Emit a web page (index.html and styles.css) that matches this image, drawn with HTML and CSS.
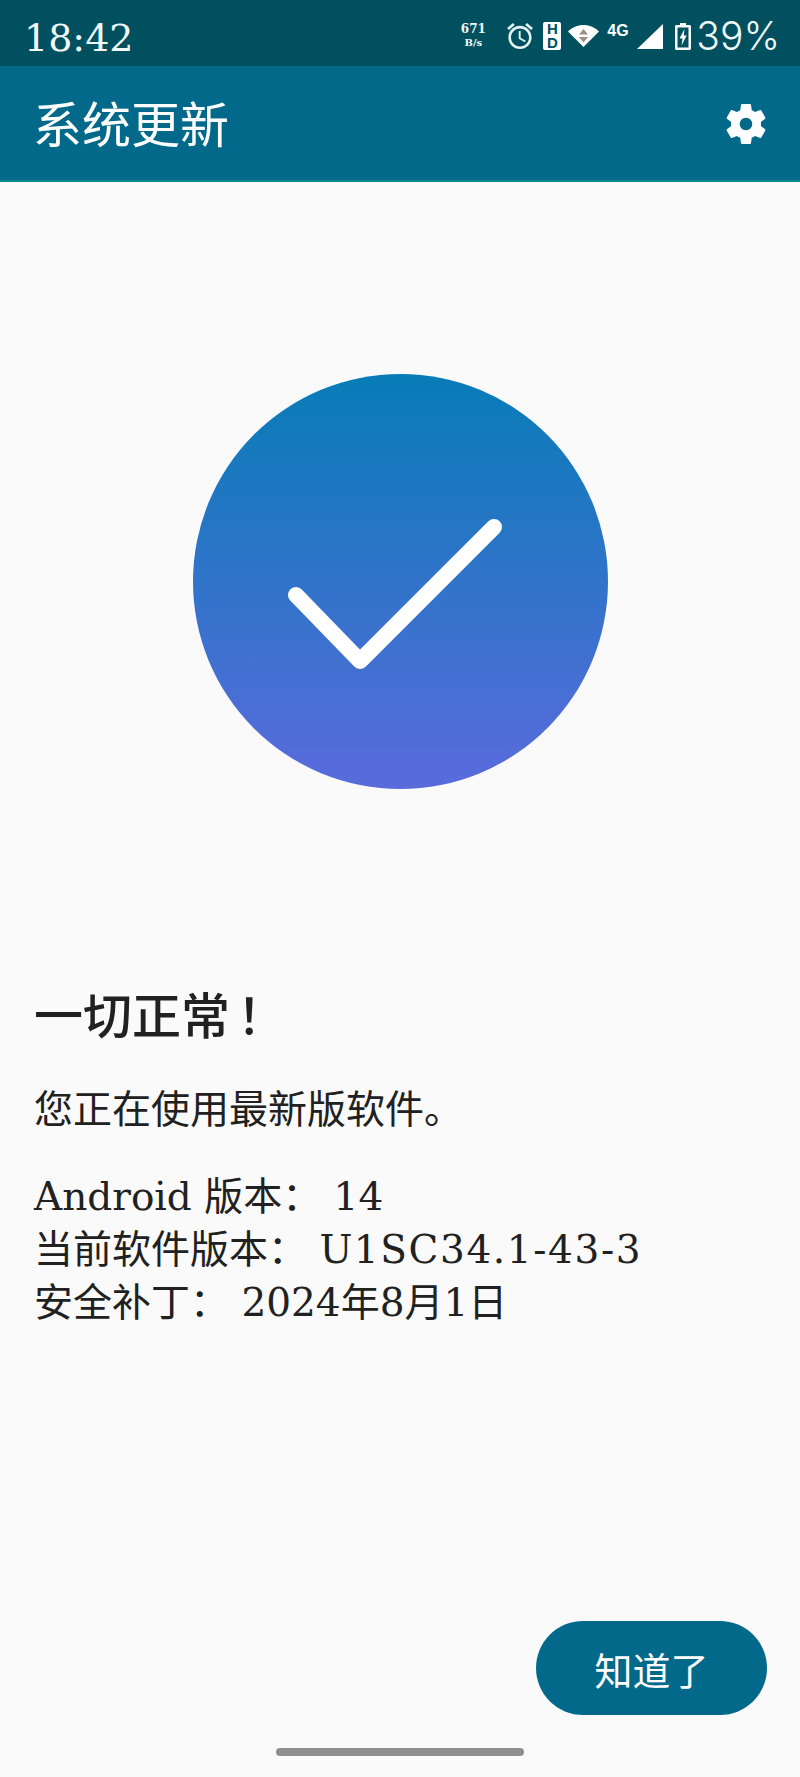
FILE: index.html
```html
<!DOCTYPE html>
<html lang="zh-CN">

<head>
    <meta charset="UTF-8">
    <title>系统更新</title>
    <link rel="stylesheet" href="styles.css">
</head>

<body>
    <div class="status_bar">
        <span class="status_time">18:42</span>
        <div class="status_icons">
            <div class="net_speed">
                <span class="net_num">671</span>
                <span class="net_unit">B/s</span>
            </div>
            <svg class="ic_alarm" viewBox="2 1.8 20 20.2" width="26" height="26">
                <path fill="#e8f4f4" d="M22 5.72l-4.6-3.86-1.29 1.53 4.6 3.86L22 5.72zM7.88 3.39L6.6 1.86 2 5.71l1.29 1.53 4.59-3.85zM12.5 8H11v6l4.75 2.85.75-1.23-4-2.37V8zM12 4c-4.97 0-9 4.03-9 9s4.02 9 9 9c4.97 0 9-4.03 9-9s-4.03-9-9-9zm0 16c-3.87 0-7-3.13-7-7s3.13-7 7-7 7 3.13 7 7-3.13 7-7 7z" />
            </svg>
            <div class="ic_hd"><span>H</span><span>D</span></div>
            <svg class="ic_wifi" viewBox="0 0 31 22" width="31" height="22">
                <path fill="#fff" d="M0 6.5C4 2.500 9.500 0 15.500 0S27 2.500 31 6.500L15.500 22z" />
                <path fill="#a08c84" d="M15.500 4l4.500 5.500H11zM11 12h9l-4.500 5.500z" />
            </svg>
            <span class="ic_4g">4G</span>
            <svg class="ic_signal" viewBox="0 0 26 25" width="26" height="25">
                <path fill="#fff" d="M26 0v25H0z" />
            </svg>
            <svg class="ic_battery" viewBox="0 0 16 27" width="16" height="27">
                <path fill="#fff" d="M5 0h6v2h3.500c.8 0 1.500.7 1.500 1.500v22c0 .8-.7 1.500-1.500 1.500h-13C.7 27 0 26.300 0 25.500v-22C0 2.700.7 2 1.500 2H5z" />
                <path fill="#00505f" d="M2.500 4.500h11v20h-11z" />
                <path fill="#fff" d="M9.500 6L4.500 15.500h3l-1 7 5.200-10h-3z" />
            </svg>
            <span class="status_pct">39%</span>
        </div>
    </div>

    <div class="app_bar">
        <h1 class="app_title">系统更新</h1>
        <svg class="ic_settings" viewBox="0 0 24 24" width="50" height="50">
            <path fill="#fff" d="M19.14 12.940c.04-.3.06-.61.06-.94 0-.32-.02-.64-.07-.94l2.030-1.580c.18-.14.23-.41.12-.61l-1.920-3.320c-.12-.22-.37-.29-.59-.22l-2.390.96c-.5-.38-1.030-.7-1.620-.94l-.36-2.540c-.04-.24-.24-.41-.48-.41h-3.840c-.24 0-.43.17-.47.41l-.36 2.540c-.59.24-1.130.57-1.620.94l-2.390-.96c-.22-.08-.47 0-.59.22L2.740 8.870c-.12.21-.08.47.12.61l2.030 1.580c-.05.3-.09.63-.09.94s.02.64.07.94l-2.030 1.580c-.18.14-.23.41-.12.61l1.920 3.320c.12.22.37.29.59.22l2.390-.96c.5.38 1.030.7 1.620.94l.36 2.540c.05.24.24.41.48.41h3.840c.24 0 .44-.17.47-.41l.36-2.540c.59-.24 1.130-.56 1.620-.94l2.390.96c.22.08.47 0 .59-.22l1.920-3.320c.12-.22.07-.47-.12-.61l-2.010-1.580zM12 15c-1.660 0-3-1.340-3-3s1.340-3 3-3 3 1.340 3 3-1.340 3-3 3z" />
        </svg>
    </div>

    <div class="content">
        <svg class="hero" viewBox="0 0 415 415" width="415" height="415">
            <defs>
                <linearGradient id="hero_fill" x1="0" y1="0" x2="0" y2="1">
                    <stop offset="0" stop-color="#077cb7" />
                    <stop offset="1" stop-color="#5a6bdc" />
                </linearGradient>
            </defs>
            <circle cx="207.500" cy="207.500" r="207.500" fill="url(#hero_fill)" />
            <path d="M103 221L167 287L301 153" fill="none" stroke="#fff" stroke-width="16" stroke-linecap="round" stroke-linejoin="round" />
        </svg>

        <h2 class="msg_title">一切正常<span class="msg_bang">！</span></h2>
        <p class="msg_sub">您正在使用最新版软件。</p>
        <div class="msg_info">
            <p>Android 版本： 14</p>
            <p>当前软件版本： <span class="msg_ver">U1SC34.1-43-3</span></p>
            <p>安全补丁： 2024年8月1日</p>
        </div>
    </div>

    <div class="footer">
        <a class="btn_ok">知道了</a>
        <div class="nav_handle"></div>
    </div>
</body>

</html>
```

FILE: styles.css
```css
* {
    margin: 0;
    padding: 0;
    box-sizing: border-box;
}

body {
    width: 800px;
    height: 1777px;
    display: flex;
    flex-direction: column;
    background-color: #fafafa;
    color: #212121;
    font-family: "DejaVu Serif", "Noto Sans CJK SC", serif;
    overflow: hidden;
}

.status_bar {
    height: 66px;
    padding: 6px 20px 0 24px;
    display: flex;
    align-items: center;
    justify-content: space-between;
    background-color: #00505f;
    color: #f2f8f8;
}

.status_time {
    font-size: 38px;
    line-height: 44px;
    margin-top: 4px;
}

.status_icons {
    display: flex;
    align-items: center;
}

.net_speed {
    width: 26px;
    margin-right: 21px;
    display: flex;
    flex-direction: column;
    align-items: center;
    font-family: "DejaVu Serif", serif;
    font-weight: bold;
    line-height: 14px;
}

.net_num {
    font-size: 12px;
}

.net_unit {
    font-size: 10px;
}

.ic_hd {
    width: 18px;
    height: 28px;
    margin-left: 10px;
    border-radius: 2px;
    display: flex;
    flex-direction: column;
    align-items: center;
    background-color: #fff;
    color: #00505f;
    font: bold 15px/14px "Liberation Sans", sans-serif;
}

.ic_wifi {
    margin-left: 7px;
}

.ic_4g {
    width: 26px;
    margin-left: 8px;
    margin-top: -10px;
    font: bold 16px/16px "Liberation Sans", sans-serif;
    color: #fff;
}

.ic_signal {
    margin-left: 4px;
}

.ic_battery {
    margin-left: 12px;
}

.status_pct {
    margin-left: 5px;
    font-family: "Inter", sans-serif;
    font-weight: 300;
    font-size: 39px;
    line-height: 44px;
}

.app_bar {
    height: 116px;
    padding: 0 29px 0 33px;
    display: flex;
    align-items: center;
    justify-content: space-between;
    background-color: #02698b;
    border-bottom: 2px solid #0a8a8e;
}

.app_title {
    margin-top: -4px;
    font-size: 49px;
    font-weight: normal;
    color: #fff;
}

.ic_settings {
    margin-top: 2px;
}

.content {
    flex: 1;
    padding: 192px 34px 0;
}

.hero {
    display: block;
    margin: 0 auto;
}

.msg_title {
    margin-top: 192px;
    font-size: 49px;
    line-height: 64px;
    font-weight: 500;
}

.msg_bang {
    margin-left: 7px;
    font-family: "Noto Sans CJK TC", sans-serif;
}

.msg_sub {
    margin-top: 34px;
    font-size: 39px;
    line-height: 52px;
}

.msg_info {
    margin-top: 34px;
    font-size: 39px;
    line-height: 53px;
}

.msg_ver {
    letter-spacing: 1.6px;
}

.footer {
    height: 156px;
    padding-right: 33px;
    display: flex;
    flex-direction: column;
    align-items: flex-end;
}

.btn_ok {
    width: 231px;
    height: 94px;
    border-radius: 47px;
    display: flex;
    align-items: center;
    justify-content: center;
    background-color: #02698b;
    color: #fff;
    font-size: 38px;
}

.nav_handle {
    width: 248px;
    height: 8px;
    margin-top: 33px;
    margin-right: 243px;
    border-radius: 4px;
    background-color: #8f8f8f;
}
```
